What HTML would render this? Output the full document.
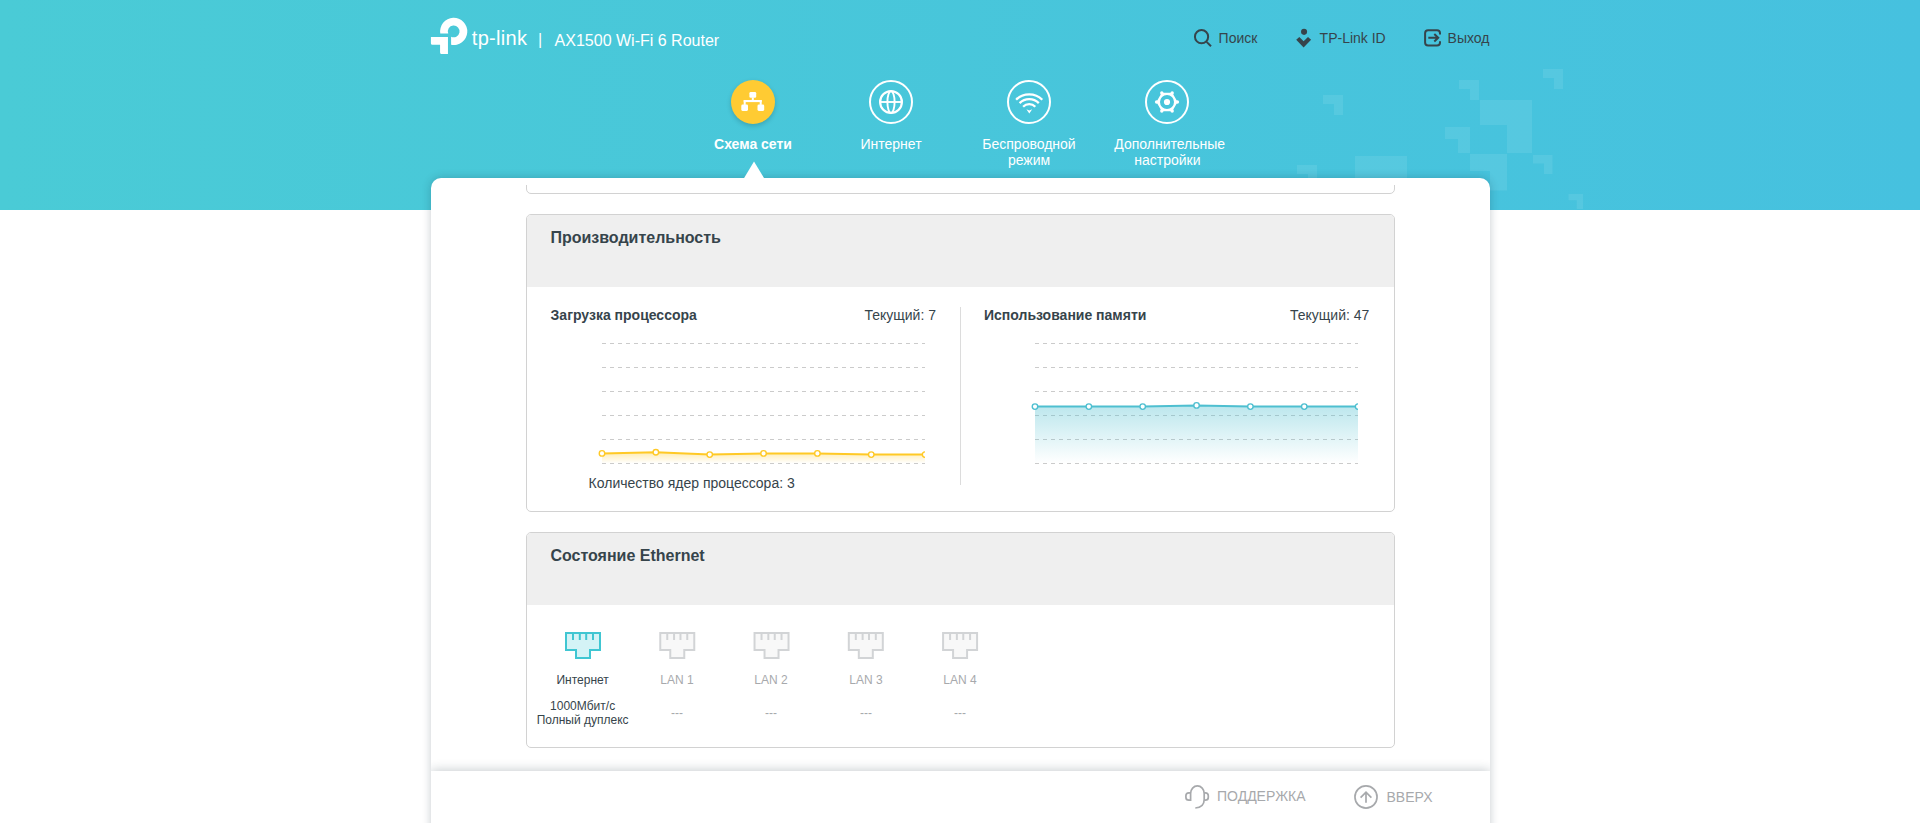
<!DOCTYPE html>
<html lang="ru">
<head>
<meta charset="utf-8">
<title>AX1500 Wi-Fi 6 Router</title>
<style>
*{box-sizing:border-box;margin:0;padding:0}
html,body{width:1920px;height:823px;overflow:hidden;background:#fff}
body{font-family:"Liberation Sans",sans-serif;color:#36444b;font-size:14px;position:relative}
.abs{position:absolute}
#hdr{position:absolute;left:0;top:0;width:1920px;height:210px;background:linear-gradient(to right,#4acbd6 0%,#46c1df 100%);overflow:hidden}
.deco{position:absolute;left:0;top:0}
#title{position:absolute;left:554.6px;top:32px;font-size:16px;line-height:18px;color:#fff;white-space:nowrap}
#sep{position:absolute;left:538px;top:31px;font-size:16px;line-height:18px;color:#fff}
.toplink{position:absolute;top:30px;font-size:14px;line-height:16px;color:#36444b;white-space:nowrap}
.nav{position:absolute;top:80px;width:160px;text-align:center;color:#fff;font-size:14px;line-height:16px}
.nav .ic{width:44px;height:44px;border-radius:50%;border:2px solid #fff;margin:0 auto 12px;display:block;position:relative}
.nav.sel .ic{border:none;background:#ffcb33;box-shadow:0 2px 5px rgba(0,0,0,.18)}
.nav.sel{font-weight:bold}
.nav svg{position:absolute;left:0;top:0}
#tri{position:absolute;left:741px;top:163px;width:0;height:0;border-left:12px solid transparent;border-right:12px solid transparent;border-bottom:15px solid #fff}
#card{position:absolute;left:431px;top:178px;width:1059px;height:700px;background:#fff;border-radius:10px 10px 0 0;box-shadow:0 0 10px rgba(15,35,50,.23)}
#clip{position:absolute;left:431px;top:185px;width:1059px;height:586px;overflow:hidden}
.panel{position:absolute;left:95px;width:869px;border:1px solid #d2d2d2;border-radius:5px;background:#fff;overflow:hidden}
.phead{position:absolute;left:0;top:0;width:100%;height:72px;background:#efefef}
.ptitle{position:absolute;left:23.4px;top:13px;font-size:16px;line-height:20px;font-weight:bold;color:#36444b;white-space:nowrap}
.b14{position:absolute;font-size:14px;line-height:16px;font-weight:bold;white-space:nowrap;color:#36444b}
.r14{position:absolute;font-size:14px;line-height:16px;white-space:nowrap;color:#36444b}
.port{position:absolute;width:120px;text-align:center;font-size:12px;line-height:14px;color:#a7a9ac}
.port.on{color:#36444b}
#fwrap{position:absolute;left:431px;top:741px;width:1059px;height:82px;overflow:hidden}
#footer{position:absolute;left:0;top:30px;width:1059px;height:60px;background:#fff;box-shadow:0 -1px 10px rgba(25,45,60,.24)}
.flink{position:absolute;top:18px;font-size:14px;line-height:16px;color:#a7a9ac;white-space:nowrap}
</style>
</head>
<body>
<div id="hdr">
<svg class="deco" width="1920" height="210" viewBox="0 0 1920 210"><path fill="#fff" fill-opacity=".085" d="M1323,95H1343V115H1334V104H1323ZM1459,80H1479V100H1470V89H1459ZM1543,69H1563V89H1554V78H1543ZM1480,100H1532V153H1507V125H1480ZM1445,127H1470V153H1458V139H1445ZM1470,154H1507V190.5H1490V171H1470ZM1533,155H1552.5V174H1544V163.5H1533ZM1355,156H1407V208H1382V181H1355ZM1297,165H1317V185H1308V174H1297ZM1568.5,194H1583V209H1576.7V200.3H1568.5Z"/></svg>
</div>
<svg class="abs" style="left:0;top:0;z-index:5" width="1920" height="210" viewBox="0 0 1920 210"><path fill="#fff" d="M440.27,33.57A13.6,13.6 0 1 1 451.1,44.75V36.64A5.85,5.85 0 1 0 448.27,33.57ZM430.9,36.9H447.96V53.9H441.6Q440.07,53.9 440.07,52.4V44.8H432.4Q430.9,44.8 430.9,43.3Z"/><g fill="#fff" transform="translate(731,80)"><rect x="18.4" y="12" width="6.8" height="5.8" rx="1.3"/><rect x="20.8" y="17.5" width="2" height="3"/><rect x="12.7" y="20" width="18" height="2.1"/><rect x="12.7" y="20.1" width="2" height="4.8"/><rect x="28.7" y="20.1" width="2" height="4.8"/><rect x="10.3" y="24.6" width="6.7" height="6.3" rx="1.3"/><rect x="26.5" y="24.6" width="6.7" height="6.3" rx="1.3"/></g><g fill="none" stroke="#fff" stroke-width="2"><circle cx="891" cy="102" r="10.9" stroke-width="2.2"/><ellipse cx="891" cy="102" rx="3.6" ry="10.9" stroke-width="1.9"/><path d="M880,102H902" stroke-width="1.9"/></g><path fill="none" stroke="#fff" stroke-width="2.3" d="M1016.12,99.72A18.5,18.5 0 0 1 1042.28,99.72M1019.58,103.18A13.6,13.6 0 0 1 1038.82,103.18M1023.12,106.72A8.6,8.6 0 0 1 1035.28,106.72"/><path fill="#fff" d="M1026.4,109.2L1029.3,110.4L1032.2,109.2L1029.3,113.4Z"/><g fill="#fff"><path fill-rule="evenodd" d="M1177.60,102.00L1172.30,111.18L1161.70,111.18L1156.40,102.00L1161.70,92.82L1172.30,92.82ZM1160,102a7,7 0 1 0 14,0a7,7 0 1 0 -14,0Z"/><circle cx="1177.40" cy="102.00" r="1.7"/><circle cx="1172.20" cy="111.01" r="1.7"/><circle cx="1161.80" cy="111.01" r="1.7"/><circle cx="1156.60" cy="102.00" r="1.7"/><circle cx="1161.80" cy="92.99" r="1.7"/><circle cx="1172.20" cy="92.99" r="1.7"/><circle cx="1167" cy="102" r="3.1"/></g><g fill="none" stroke="#36444b" stroke-width="2"><circle cx="1201.55" cy="36.7" r="6.6"/><path d="M1206.6,41.9L1211,46.2"/></g><g fill="#36444b"><circle cx="1304.05" cy="31.86" r="3.05"/><path d="M1296.2,39.8L1299.3,36.9L1303.6,41.2L1308,36.9L1311.1,39.8L1303.6,47.5Z"/></g><g fill="none" stroke="#36444b" stroke-width="2"><path d="M1440,34.5V33.3Q1440,30.3 1437,30.3H1428.1Q1425.1,30.3 1425.1,33.3V42.6Q1425.1,45.6 1428.1,45.6H1437Q1440,45.6 1440,42.6V41.2"/><path d="M1428.3,37.75H1438M1434.3,34.1L1438.2,37.75L1434.3,41.4"/></g><path fill="#fff" d="M743.8,178.5L754,161.5L764.3,178.5Z"/></svg>
<div id="logotext" class="abs" style="left:471.8px;top:26px;font-size:20px;line-height:24px;color:#fff;letter-spacing:.3px;white-space:nowrap;z-index:6">tp-link</div>
<div id="sep">|</div>
<div id="title">AX1500 Wi-Fi 6 Router</div>
<div class="toplink" style="left:1218.6px">Поиск</div>
<div class="toplink" style="left:1319.6px">TP-Link ID</div>
<div class="toplink" style="left:1447.6px">Выход</div>

<div class="nav sel" style="left:673px"><span class="ic"></span>Схема сети</div>
<div class="nav" style="left:811px"><span class="ic"></span>Интернет</div>
<div class="nav" style="left:949px"><span class="ic"></span>Беспроводной<br>режим</div>
<div class="nav" style="left:1089px"><span class="ic" style="margin-left:56px"></span><span style="position:relative;left:.7px">Дополнительные</span><br><span style="position:relative;left:-1.6px">настройки</span></div>

<div id="card"></div>
<div id="clip">
 <div class="panel" style="top:-40px;height:49px"></div>
 <div class="panel" id="perf" style="top:29px;height:298px">
  <div class="phead"></div><div class="ptitle">Производительность</div>
  <div class="b14" style="left:23.6px;top:92px">Загрузка процессора</div>
  <div class="r14" style="right:458px;top:92px">Текущий: 7</div>
  <div class="abs" style="left:433px;top:92px;width:1px;height:178px;background:#dcdcdc"></div>
  <div class="b14" style="left:457px;top:92px">Использование памяти</div>
  <div class="r14" style="right:24.7px;top:92px">Текущий: 47</div>
  <svg class="abs" style="left:0;top:0" width="867" height="296" viewBox="0 0 867 296"><defs><linearGradient id="gy" x1="0" y1="0" x2="0" y2="1"><stop offset="0" stop-color="#ffc926" stop-opacity="0.35"/><stop offset="1" stop-color="#ffc926" stop-opacity="0"/></linearGradient><clipPath id="cgy"><rect x="69" y="115" width="329" height="140"/></clipPath></defs><path d="M75,128.5H398" stroke="#cbcbcb" stroke-width="1" stroke-dasharray="4 4" fill="none"/><path d="M75,152.5H398" stroke="#cbcbcb" stroke-width="1" stroke-dasharray="4 4" fill="none"/><path d="M75,176.5H398" stroke="#cbcbcb" stroke-width="1" stroke-dasharray="4 4" fill="none"/><path d="M75,200.5H398" stroke="#cbcbcb" stroke-width="1" stroke-dasharray="4 4" fill="none"/><path d="M75,224.5H398" stroke="#cbcbcb" stroke-width="1" stroke-dasharray="4 4" fill="none"/><path d="M75,248.5H398" stroke="#cbcbcb" stroke-width="1" stroke-dasharray="4 4" fill="none"/><g clip-path="url(#cgy)"><path d="M75.00,238.40L128.85,237.20L182.70,239.60L236.55,238.40L290.40,238.40L344.25,239.60L398.10,239.60L398.10,248.5L75.00,248.5Z" fill="url(#gy)"/><path d="M75.00,238.40L128.85,237.20L182.70,239.60L236.55,238.40L290.40,238.40L344.25,239.60L398.10,239.60" fill="none" stroke="#ffc926" stroke-width="2" stroke-linejoin="round"/><circle cx="75.00" cy="238.40" r="2.75" fill="#fff" stroke="#ffc926" stroke-width="1.4"/><circle cx="128.85" cy="237.20" r="2.75" fill="#fff" stroke="#ffc926" stroke-width="1.4"/><circle cx="182.70" cy="239.60" r="2.75" fill="#fff" stroke="#ffc926" stroke-width="1.4"/><circle cx="236.55" cy="238.40" r="2.75" fill="#fff" stroke="#ffc926" stroke-width="1.4"/><circle cx="290.40" cy="238.40" r="2.75" fill="#fff" stroke="#ffc926" stroke-width="1.4"/><circle cx="344.25" cy="239.60" r="2.75" fill="#fff" stroke="#ffc926" stroke-width="1.4"/><circle cx="398.10" cy="239.60" r="2.75" fill="#fff" stroke="#ffc926" stroke-width="1.4"/></g><defs><linearGradient id="gt" x1="0" y1="0" x2="0" y2="1"><stop offset="0" stop-color="#4ebfd0" stop-opacity="0.38"/><stop offset="1" stop-color="#4ebfd0" stop-opacity="0"/></linearGradient><clipPath id="cgt"><rect x="502" y="115" width="329" height="140"/></clipPath></defs><path d="M508,128.5H831" stroke="#cbcbcb" stroke-width="1" stroke-dasharray="4 4" fill="none"/><path d="M508,152.5H831" stroke="#cbcbcb" stroke-width="1" stroke-dasharray="4 4" fill="none"/><path d="M508,176.5H831" stroke="#cbcbcb" stroke-width="1" stroke-dasharray="4 4" fill="none"/><path d="M508,200.5H831" stroke="#cbcbcb" stroke-width="1" stroke-dasharray="4 4" fill="none"/><path d="M508,224.5H831" stroke="#cbcbcb" stroke-width="1" stroke-dasharray="4 4" fill="none"/><path d="M508,248.5H831" stroke="#cbcbcb" stroke-width="1" stroke-dasharray="4 4" fill="none"/><g clip-path="url(#cgt)"><path d="M508.00,191.60L561.85,191.60L615.70,191.60L669.55,190.40L723.40,191.60L777.25,191.60L831.10,191.60L831.10,248.5L508.00,248.5Z" fill="url(#gt)"/><path d="M508.00,191.60L561.85,191.60L615.70,191.60L669.55,190.40L723.40,191.60L777.25,191.60L831.10,191.60" fill="none" stroke="#4ebfd0" stroke-width="2" stroke-linejoin="round"/><circle cx="508.00" cy="191.60" r="2.75" fill="#fff" stroke="#4ebfd0" stroke-width="1.4"/><circle cx="561.85" cy="191.60" r="2.75" fill="#fff" stroke="#4ebfd0" stroke-width="1.4"/><circle cx="615.70" cy="191.60" r="2.75" fill="#fff" stroke="#4ebfd0" stroke-width="1.4"/><circle cx="669.55" cy="190.40" r="2.75" fill="#fff" stroke="#4ebfd0" stroke-width="1.4"/><circle cx="723.40" cy="191.60" r="2.75" fill="#fff" stroke="#4ebfd0" stroke-width="1.4"/><circle cx="777.25" cy="191.60" r="2.75" fill="#fff" stroke="#4ebfd0" stroke-width="1.4"/><circle cx="831.10" cy="191.60" r="2.75" fill="#fff" stroke="#4ebfd0" stroke-width="1.4"/></g></svg>
  <div class="r14" style="left:61.6px;top:260px">Количество ядер процессора: 3</div>
 </div>
 <div class="panel" id="eth" style="top:347px;height:216px">
  <div class="phead"></div><div class="ptitle">Состояние Ethernet</div>
  <svg class="abs" style="left:0;top:99px" width="500" height="27" viewBox="0 0 500 27"><g transform="translate(38.0,0)"><path d="M1,1H35V18H25V26H11V18H1Z" fill="#d4f3f6" stroke="#40c6d2" stroke-width="2"/><path d="M8,2V8M14.8,2V8M21.2,2V8M28,2V8" stroke="#40c6d2" stroke-width="2" fill="none"/></g><g transform="translate(132.27,0)"><path d="M1,1H35V18H25V26H11V18H1Z" fill="#f8f8f8" stroke="#d2d4d6" stroke-width="2"/><path d="M8,2V8M14.8,2V8M21.2,2V8M28,2V8" stroke="#d2d4d6" stroke-width="2" fill="none"/></g><g transform="translate(226.54,0)"><path d="M1,1H35V18H25V26H11V18H1Z" fill="#f8f8f8" stroke="#d2d4d6" stroke-width="2"/><path d="M8,2V8M14.8,2V8M21.2,2V8M28,2V8" stroke="#d2d4d6" stroke-width="2" fill="none"/></g><g transform="translate(320.81,0)"><path d="M1,1H35V18H25V26H11V18H1Z" fill="#f8f8f8" stroke="#d2d4d6" stroke-width="2"/><path d="M8,2V8M14.8,2V8M21.2,2V8M28,2V8" stroke="#d2d4d6" stroke-width="2" fill="none"/></g><g transform="translate(415.08,0)"><path d="M1,1H35V18H25V26H11V18H1Z" fill="#f8f8f8" stroke="#d2d4d6" stroke-width="2"/><path d="M8,2V8M14.8,2V8M21.2,2V8M28,2V8" stroke="#d2d4d6" stroke-width="2" fill="none"/></g></svg>
  <div class="port on" style="left:-4.4px;top:140px">Интернет<div style="margin-top:12px">1000Мбит/с<br>Полный дуплекс</div></div>
  <div class="port" style="left:90px;top:140px">LAN 1<div style="margin-top:19px">---</div></div>
  <div class="port" style="left:184px;top:140px">LAN 2<div style="margin-top:19px">---</div></div>
  <div class="port" style="left:279px;top:140px">LAN 3<div style="margin-top:19px">---</div></div>
  <div class="port" style="left:373px;top:140px">LAN 4<div style="margin-top:19px">---</div></div>
 </div>
</div>
<div id="fwrap"><div id="footer">
<svg class="abs" style="left:0;top:0" width="1059" height="52" viewBox="0 0 1059 52"><g fill="none" stroke="#a7a9ac" stroke-width="1.7" transform="translate(-431,-771)"><path d="M1190.6,801V793.5A6.8,7.6 0 0 1 1204.2,793.5V799.5C1204.2,804.6 1200.6,807.6 1195.3,808"/><path d="M1190.6,792.8H1188.9Q1185.9,792.8 1185.9,795.8V797.2Q1185.9,800.2 1188.9,800.2H1190.6"/><path d="M1204.2,792.8H1205.3Q1208.3,792.8 1208.3,795.8V797.2Q1208.3,800.2 1205.3,800.2H1204.2"/></g><g fill="none" stroke="#a7a9ac" stroke-width="1.7" transform="translate(-431,-771)"><circle cx="1366" cy="797" r="11.05"/><path d="M1366,802.8V792.4M1360.6,797.7L1366,792.2L1371.4,797.7"/></g></svg>
 <div class="flink" style="left:786px;top:17px">ПОДДЕРЖКА</div>
 <div class="flink" style="left:955.5px">ВВЕРХ</div>
</div></div>
</body>
</html>
